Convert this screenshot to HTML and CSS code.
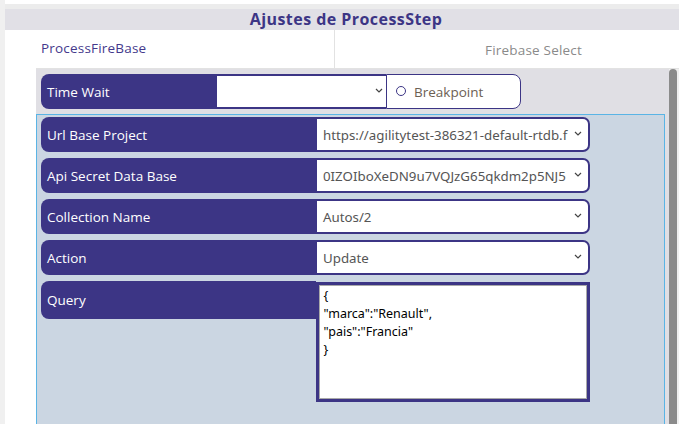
FILE: index.html
```html
<!DOCTYPE html>
<html lang="es">
<head>
<meta charset="utf-8">
<title>Ajustes de ProcessStep</title>
<link rel="stylesheet" href="styles.css">
</head>
<body>
<div class="app">
  <div class="leftbar"></div>
  <div class="main">
    <div class="topwhite"></div>
    <div class="topgray"></div>
    <div class="header">Ajustes de ProcessStep</div>
    <div class="tabs">
      <div class="tab tab-active">ProcessFireBase</div>
      <div class="tab tab-other">Firebase Select</div>
    </div>
    <div class="panel">
      <div class="content">
        <div class="timerow">
          <div class="tw-label">Time Wait</div>
          <div class="tw-select">
            <svg class="chev" width="8" height="5" viewBox="0 0 8 5"><path d="M1 1l3 3 3-3" fill="none" stroke="#444" stroke-width="1.2"/></svg>
          </div>
          <div class="tw-break">
            <span class="radio"></span>
            <span class="bp-text">Breakpoint</span>
          </div>
        </div>
        <div class="inner">
          <div class="row">
            <div class="label">Url Base Project</div>
            <div class="select"><span class="val">https://agilitytest-386321-default-rtdb.f</span><svg class="chev" width="8" height="5" viewBox="0 0 8 5"><path d="M1 1l3 3 3-3" fill="none" stroke="#444" stroke-width="1.2"/></svg></div>
          </div>
          <div class="row">
            <div class="label">Api Secret Data Base</div>
            <div class="select"><span class="val">0IZOIboXeDN9u7VQJzG65qkdm2p5NJ5</span><svg class="chev" width="8" height="5" viewBox="0 0 8 5"><path d="M1 1l3 3 3-3" fill="none" stroke="#444" stroke-width="1.2"/></svg></div>
          </div>
          <div class="row">
            <div class="label">Collection Name</div>
            <div class="select"><span class="val">Autos/2</span><svg class="chev" width="8" height="5" viewBox="0 0 8 5"><path d="M1 1l3 3 3-3" fill="none" stroke="#444" stroke-width="1.2"/></svg></div>
          </div>
          <div class="row">
            <div class="label">Action</div>
            <div class="select"><span class="val">Update</span><svg class="chev" width="8" height="5" viewBox="0 0 8 5"><path d="M1 1l3 3 3-3" fill="none" stroke="#444" stroke-width="1.2"/></svg></div>
          </div>
          <div class="row row-query">
            <div class="label label-query">Query</div>
            <div class="textarea">{<br>"marca":"Renault",<br>"pais":"Francia"<br>}</div>
          </div>
        </div>
      </div>
      <div class="scroll"><div class="thumb"></div></div>
    </div>
  </div>
</div>
</body>
</html>
```
FILE: styles.css
```css
html, body {
  margin: 0;
  padding: 0;
  height: 100%;
  overflow: hidden;
  background: #ffffff;
  font-family: "Open Sans", "Liberation Sans", sans-serif;
}
.app {
  display: flex;
  height: 424px;
  overflow: hidden;
}
.leftbar {
  width: 5px;
  background: #f0f0f0;
  flex: none;
}
.main {
  flex: 1;
  display: flex;
  flex-direction: column;
  min-width: 0;
}
.topwhite {
  height: 4px;
  background: #ffffff;
}
.topgray {
  height: 5px;
  background: #ececec;
}
.header {
  height: 21px;
  background: #e1e0e6;
  color: #3c3585;
  font-weight: 700;
  font-size: 16px;
  letter-spacing: 0.45px;
  line-height: 21px;
  text-align: center;
  padding-left: 8px;
}
.tabs {
  margin-left: 31px;
  height: 38px;
  display: flex;
  border-bottom: 1px solid #e2e2e2;
}
.tab {
  font-size: 13.5px;
  letter-spacing: 0.2px;
  line-height: 36px;
}
.tab-active {
  width: 293px;
  padding-left: 5px;
  color: #44398c;
  border-right: 1px solid #e2e2e2;
  margin-bottom: -2px;
}
.tab-other {
  padding-left: 150px;
  color: #8a8a8a;
  padding-top: 2px;
}
.panel {
  margin-left: 31px;
  flex: 1;
  display: flex;
  min-height: 0;
}
.content {
  flex: 1;
  background: #e0dfe4;
  padding-top: 5px;
  min-width: 0;
  overflow: hidden;
}
.scroll {
  width: 10px;
  background: #f0f0f0;
  flex: none;
}
.thumb {
  width: 8px;
  height: 400px;
  background: #8b8b8b;
  border-radius: 4px 4px 0 0;
}
.timerow {
  margin-left: 5px;
  display: flex;
  height: 35px;
  width: 480px;
}
.tw-label {
  width: 170px;
  background: #3c3585;
  border-radius: 8px 0 0 8px;
  color: #fff;
  font-size: 13.5px;
  display: flex;
  align-items: center;
  padding-left: 6px;
}
.tw-select {
  width: 169px;
  box-sizing: border-box;
  background: #fff;
  border-top: 2px solid #3c3585;
  border-bottom: 2px solid #3c3585;
  display: flex;
  align-items: center;
  justify-content: flex-end;
  padding-right: 3px;
}
.tw-break {
  width: 135px;
  box-sizing: border-box;
  background: #fff;
  border: 1.5px solid #3c3585;
  border-radius: 0 8px 8px 0;
  display: flex;
  align-items: center;
  padding-left: 9px;
  gap: 8px;
}
.radio {
  width: 10px;
  height: 10px;
  border: 1.3px solid #3c3585;
  border-radius: 50%;
  box-sizing: border-box;
  margin-top: -2px;
}
.bp-text {
  color: #6c6053;
  font-size: 13.5px;
}
.inner {
  margin-top: 5px;
  margin-right: 4px;
  height: 400px;
  background: #cbd6e2;
  border: 1px solid #5ab4e5;
  padding: 2px 0 0 4px;
}
.row {
  display: flex;
  height: 35px;
  margin-bottom: 6px;
  width: 549px;
}
.label {
  width: 270px;
  background: #3c3585;
  border-radius: 8px 0 0 8px;
  color: #fff;
  font-size: 13.5px;
  display: flex;
  align-items: center;
  padding-left: 6px;
}
.select {
  width: 273px;
  box-sizing: border-box;
  background: #fff;
  border: 2px solid #3c3585;
  border-left: none;
  border-radius: 0 7px 7px 0;
  display: flex;
  align-items: center;
  padding-left: 6px;
  padding-right: 6px;
  gap: 4px;
}
.val {
  flex: 1;
  white-space: nowrap;
  color: #555;
  font-size: 13.3px;
  font-family: "Noto Sans", "Open Sans", sans-serif;
}
.chev {
  flex: none;
  margin-top: -2px;
}
.row-query {
  align-items: flex-start;
  height: auto;
}
.label-query {
  height: 38px;
}
.textarea {
  width: 274px;
  height: 120px;
  box-sizing: border-box;
  background: #fff;
  border: 3px solid #3c3585;
  box-shadow: inset 0 0 0 1px #a9a9a9;
  margin-top: 1px;
  padding: 2px 4px;
  font-family: "Noto Sans", "Open Sans", sans-serif;
  font-size: 12.5px;
  line-height: 18px;
  color: #000;
}
```
